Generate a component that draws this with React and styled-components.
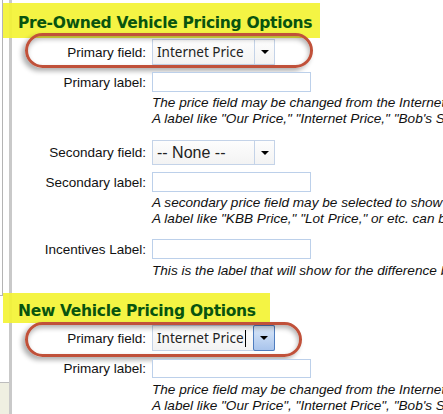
import styled, { createGlobalStyle } from 'styled-components';

const GlobalStyle = createGlobalStyle`
  html, body {
    margin: 0;
    padding: 0;
    background: #fff;
    overflow: hidden;
  }
  body {
    font-family: "Liberation Sans", Arial, sans-serif;
  }
`;

const Page = styled.div`
  display: flex;
  width: 443px;
  height: 414px;
  overflow: hidden;
  background: #fff;
`;

const Rail = styled.div`
  display: flex;
  flex-direction: column;
  flex: 0 0 9px;
  border-right: 3px solid #c9c9c9;
`;

const RailTop = styled.div`
  width: 2px;
  height: 295px;
  border-right: 1px solid #b4b4b4;
  border-bottom: 1px solid #b4b4b4;
`;

const RailFoot = styled.div`
  margin-top: auto;
  height: 31px;
  background: #efefe1;
  border-top: 1px solid #bdbdbd;
`;

const Main = styled.div`
  flex: 1;
  min-width: 0;
  padding-top: 3px;
`;

const Heading = styled.h2`
  width: fit-content;
  margin: ${p => p.$top || 0}px 0 0 -9px;
  padding: ${p => p.$padTop}px ${p => p.$padRight}px ${p => p.$padBottom}px 15px;
  background: rgba(243, 243, 52, 0.92);
  color: #09540f;
  font-family: "DejaVu Sans", Verdana, sans-serif;
  font-weight: bold;
  font-size: 15.5px;
  line-height: 15px;
  letter-spacing: -0.3px;
  white-space: nowrap;
  position: relative;
`;

const Row = styled.div`
  position: relative;
  display: flex;
  align-items: center;
  gap: 6px;
  margin-top: ${p => p.$top}px;
`;

const Label = styled.label`
  flex: 0 0 134px;
  text-align: right;
  font-size: 13.5px;
  color: #111;
  white-space: nowrap;
`;

const Select = styled.div`
  display: flex;
  align-items: stretch;
  width: 123px;
  height: ${p => p.$h}px;
  box-sizing: border-box;
  border: 1px solid #c4d3e8;
  background: linear-gradient(#fdfdfd, #f3f3f3);
`;

const SelectText = styled.div`
  flex: 1;
  display: flex;
  align-items: center;
  padding-left: 4px;
  font-family: ${p => (p.$combo ? '"Noto Sans", sans-serif' : '"Liberation Sans", Arial, sans-serif')};
  font-size: ${p => (p.$combo ? '13.5px' : '16px')};
  color: #222;
  white-space: nowrap;
`;

const Caret = styled.span`
  display: inline-block;
  width: 1px;
  height: 17px;
  margin-left: 1px;
  background: #000;
`;

const DropButton = styled.div`
  flex: 0 0 20px;
  display: flex;
  align-items: center;
  justify-content: center;
  box-sizing: border-box;
  border-left: 1px solid #c4d3e8;
  ${p =>
    p.$focused &&
    `
    margin: -1px -1px -1px 0;
    flex-basis: 22px;
    border: 1px solid #4f7dbf;
    border-radius: 2px;
    background: linear-gradient(#dbe8f9, #a9c4ec);
  `}

  &::after {
    content: '';
    border-left: 4px solid transparent;
    border-right: 4px solid transparent;
    border-top: 4px solid #000;
  }
`;

const TextInput = styled.div`
  width: 159px;
  height: ${p => p.$h || 20}px;
  box-sizing: border-box;
  border: 1px solid #bcd0ea;
  background: #fff;
`;

const Help = styled.div`
  margin: ${p => p.$top}px 0 0 140px;
  font-style: italic;
  font-size: 13.6px;
  line-height: 16px;
  color: #111;
  white-space: nowrap;
`;

const Oval = styled.div`
  position: absolute;
  left: 13px;
  top: ${p => p.$top}px;
  width: ${p => p.$w}px;
  height: 35px;
  box-sizing: border-box;
  border: 3px solid #c0513a;
  border-radius: 18px;
  box-shadow: -3px 3px 5px rgba(0, 0, 0, 0.32), inset -1px 3px 5px rgba(0, 0, 0, 0.3);
  pointer-events: none;
`;

const App = () => (
  <Page>
    <GlobalStyle />
    <Rail>
      <RailTop />
      <RailFoot />
    </Rail>
    <Main>
      <Heading $padTop={13} $padBottom={7} $padRight={8}>
        Pre-Owned Vehicle Pricing Options
      </Heading>

      <Row $top={1}>
        <Label>Primary field:</Label>
        <Select $h={26}>
          <SelectText $combo>Internet Price</SelectText>
          <DropButton />
        </Select>
        <Oval $top={-6} $w={288} />
      </Row>
      <Row $top={7}>
        <Label>Primary label:</Label>
        <TextInput />
      </Row>
      <Help $top={3}>
        The price field may be changed from the Internet Price to any other price field.
        <br />
        A label like "Our Price," "Internet Price," "Bob's Special Price," etc. can be used.
      </Help>

      <Row $top={13}>
        <Label>Secondary field:</Label>
        <Select $h={25}>
          <SelectText>-- None --</SelectText>
          <DropButton />
        </Select>
      </Row>
      <Row $top={7}>
        <Label>Secondary label:</Label>
        <TextInput />
      </Row>
      <Help $top={3}>
        A secondary price field may be selected to show beside the primary price.
        <br />
        A label like "KBB Price," "Lot Price," or etc. can be used.
      </Help>

      <Row $top={12}>
        <Label>Incentives Label:</Label>
        <TextInput />
      </Row>
      <Help $top={4}>This is the label that will show for the difference between prices.</Help>

      <Heading $top={14} $padTop={11} $padBottom={4} $padRight={14}>
        New Vehicle Pricing Options
      </Heading>

      <Row $top={2}>
        <Label>Primary field:</Label>
        <Select $h={26}>
          <SelectText $combo>
            Internet Price
            <Caret />
          </SelectText>
          <DropButton $focused />
        </Select>
        <Oval $top={-3} $w={277} />
      </Row>
      <Row $top={8}>
        <Label>Primary label:</Label>
        <TextInput $h={19} />
      </Row>
      <Help $top={4}>
        The price field may be changed from the Internet Price to any other price field.
        <br />
        A label like "Our Price", "Internet Price", "Bob's Special Price", etc. can be used.
      </Help>
    </Main>
  </Page>
);

export default App;
